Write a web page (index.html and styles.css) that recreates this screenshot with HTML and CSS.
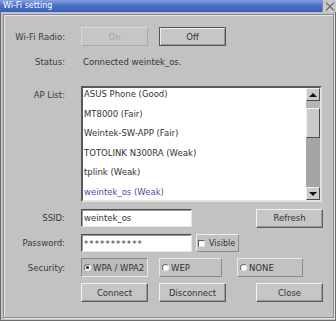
FILE: index.html
```html
<!DOCTYPE html>
<html lang="en">
<head>
  <meta charset="UTF-8" />
  <title>Wi-Fi setting</title>
  <link rel="stylesheet" href="styles.css">
</head>
<body>
  <div class="window">
    <div class="titlebar">
      <span class="title">Wi-Fi setting</span>
      <span class="close">
        <svg width="12" height="11" viewBox="0 0 12 11"><path d="M2 1.5 L10 9.5 M10 1.5 L2 9.5" stroke="#6a6a6a" stroke-width="1.1" fill="none"/></svg>
      </span>
    </div>
    <div class="body">
      <div class="panel">
        <div class="row row-btn">
          <span class="lbl">Wi-Fi Radio:</span>
          <div class="ctl">
            <button class="btn disabled">On</button>
            <button class="btn focus">Off</button>
          </div>
        </div>

        <div class="row row-status">
          <span class="lbl">Status:</span>
          <div class="ctl"><span class="status-text">Connected weintek_os.</span></div>
        </div>

        <div class="row row-list">
          <span class="lbl lbl-top">AP List:</span>
          <div class="ctl">
            <div class="listbox">
              <div class="items">
                <div class="item">ASUS Phone (Good)</div>
                <div class="item">MT8000 (Fair)</div>
                <div class="item">Weintek-SW-APP (Fair)</div>
                <div class="item">TOTOLINK N300RA (Weak)</div>
                <div class="item">tplink (Weak)</div>
                <div class="item selected">weintek_os (Weak)</div>
              </div>
              <div class="scrollbar">
                <div class="sb-btn"><span class="tri up"></span></div>
                <div class="sb-gap"></div>
                <div class="sb-thumb"></div>
                <div class="sb-track"></div>
                <div class="sb-btn"><span class="tri down"></span></div>
              </div>
            </div>
          </div>
        </div>

        <div class="row row-input">
          <span class="lbl">SSID:</span>
          <div class="ctl">
            <div class="input">weintek_os</div>
            <button class="btn push-right">Refresh</button>
          </div>
        </div>

        <div class="row row-input row-pass">
          <span class="lbl">Password:</span>
          <div class="ctl">
            <div class="input pass">***********</div>
            <div class="check-box"><span class="check"></span>Visible</div>
          </div>
        </div>

        <div class="row row-btn row-sec">
          <span class="lbl">Security:</span>
          <div class="ctl">
            <div class="radio-box on w-wpa"><span class="radio checked"></span>WPA / WPA2</div>
            <div class="radio-box w-wep"><span class="radio"></span>WEP</div>
            <div class="radio-box w-none"><span class="radio"></span>NONE</div>
          </div>
        </div>

        <div class="row row-btn row-actions">
          <span class="lbl"></span>
          <div class="ctl">
            <button class="btn">Connect</button>
            <button class="btn">Disconnect</button>
            <button class="btn push-right">Close</button>
          </div>
        </div>
      </div>
    </div>
  </div>
</body>
</html>
```

FILE: styles.css
```css
* {
  box-sizing: border-box;
}

body {
  margin: 0;
  background: #c2c2c2;
  font-family: 'DejaVu Sans', Verdana, sans-serif;
  font-size: 8.5px;
  color: #333333;
}

.window {
  width: 336px;
  height: 321px;
  background: #c2c2c2;
  border: 1px solid #6e6e6e;
  border-top: none;
  display: flex;
  flex-direction: column;
}

.titlebar {
  height: 12px;
  margin: 0 -1px;
  display: flex;
  align-items: stretch;
  background: linear-gradient(#86a2e2, #4a6fc6 45%, #3b5fb8);
}

.title {
  flex: 1;
  color: #ffffff;
  font-size: 8px;
  line-height: 12px;
  padding-left: 3px;
}

.close {
  width: 14px;
  background: #c9c9c9;
  border-left: 1px solid #8e8e8e;
  display: flex;
  align-items: center;
  justify-content: center;
}

.body {
  flex: 1;
  padding: 2px 1px 2px 2px;
  display: flex;
}

.panel {
  flex: 1;
  border: 1px solid #8c8c8c;
  box-shadow: inset 1px 1px 0 #e6e6e6, 1px 1px 0 #e6e6e6;
  padding: 12px 10px 0 1px;
}

.row {
  display: flex;
  align-items: center;
}

.lbl {
  width: 60px;
  margin-right: 16px;
  text-align: right;
  color: #3a3a3a;
  flex-shrink: 0;
}

.ctl {
  width: 241px;
  display: flex;
  align-items: center;
  height: 100%;
}

.row-btn {
  height: 19px;
}

.row-status {
  height: 18px;
  margin-top: 7px;
}

.status-text {
  padding-left: 2px;
}

.row-list {
  height: 116px;
  margin-top: 15px;
  align-items: flex-start;
}

.lbl-top {
  margin-top: 4px;
}

.row-input {
  height: 18px;
  margin-top: 7px;
}

.row-sec {
  margin-top: 6px;
}

.row-actions {
  margin-top: 6px;
}

/* buttons */
.btn {
  width: 67px;
  height: 19px;
  margin: 0 11px 0 0;
  padding: 0;
  font-family: inherit;
  font-size: 8.5px;
  color: #333333;
  background: #c6c6c6;
  border: 1px solid;
  border-color: #f2f2f2 #5e5e5e #5e5e5e #f2f2f2;
  box-shadow: inset -1px -1px 0 #999999;
}

.btn.focus {
  border-color: #555555;
  box-shadow: inset 1px 1px 0 #eeeeee, inset -1px -1px 0 #949494;
}

.btn.disabled {
  color: #a6a6a6;
  border-color: #dadada #a8a8a8 #a8a8a8 #dadada;
  box-shadow: none;
}

.push-right {
  margin-left: auto;
  margin-right: -1px;
}

/* inputs */
.input {
  width: 111px;
  height: 18px;
  background: #ffffff;
  border: 1px solid;
  border-color: #4e4e4e #e4e4e4 #e4e4e4 #4e4e4e;
  box-shadow: inset 1px 1px 0 #9a9a9a;
  padding-left: 2px;
  line-height: 16px;
}

.input.pass {
  letter-spacing: 1.1px;
  padding-top: 1px;
}

.check-box {
  width: 43px;
  height: 18px;
  margin-left: 4px;
  border: 1px solid;
  border-color: #eeeeee #8a8a8a #8a8a8a #eeeeee;
  display: flex;
  align-items: center;
  padding-left: 1px;
  white-space: nowrap;
  font-size: 8px;
}

.check {
  width: 7px;
  height: 7px;
  flex-shrink: 0;
  background: #ffffff;
  border: 1px solid;
  border-color: #5a5a5a #e0e0e0 #e0e0e0 #5a5a5a;
  margin-right: 4px;
}

/* radios */
.radio-box {
  height: 19px;
  border: 1px solid;
  border-color: #e8e8e8 #8a8a8a #8a8a8a #e8e8e8;
  display: flex;
  align-items: center;
  padding-left: 2px;
}

.radio-box.on {
  background: #bcbcbc;
  border-color: #8a8a8a #e8e8e8 #e8e8e8 #8a8a8a;
}

.w-wpa {
  width: 67px;
  margin-right: 11px;
}

.w-wep {
  width: 63px;
  margin-right: 15px;
}

.w-none {
  width: 66px;
}

.radio {
  width: 7px;
  height: 7px;
  border-radius: 50%;
  background: #ffffff;
  border: 1px solid;
  border-color: #6a6a6a #f0f0f0 #f0f0f0 #6a6a6a;
  margin-right: 2px;
  position: relative;
}

.radio.checked::after {
  content: "";
  position: absolute;
  left: 1px;
  top: 1px;
  width: 3px;
  height: 3px;
  border-radius: 50%;
  background: #111111;
}

/* list */
.listbox {
  width: 242px;
  height: 116px;
  display: flex;
  background: #ffffff;
  border: 2px solid;
  border-color: #5a5a5a #e2e2e2 #e2e2e2 #5a5a5a;
  overflow: hidden;
}

.items {
  flex: 1;
  margin-top: -3px;
}

.item {
  height: 19.6px;
  line-height: 19.6px;
  padding-left: 1px;
  color: #333333;
  white-space: nowrap;
}

.item.selected {
  color: #4a4aa6;
}

.scrollbar {
  width: 14px;
  display: flex;
  flex-direction: column;
  background: #a4a4a4;
}

.sb-btn {
  height: 13px;
  background: #cacaca;
  border: 1px solid;
  border-color: #f0f0f0 #4a4a4a #4a4a4a #f0f0f0;
  display: flex;
  align-items: center;
  justify-content: center;
}

.sb-gap {
  height: 7px;
  background: #b4b4b4;
}

.sb-thumb {
  height: 30px;
  background: #cacaca;
  border: 1px solid;
  border-color: #f0f0f0 #4a4a4a #4a4a4a #f0f0f0;
}

.sb-track {
  flex: 1;
}

.tri {
  width: 0;
  height: 0;
  border-left: 4px solid transparent;
  border-right: 4px solid transparent;
}

.tri.up {
  border-bottom: 4px solid #111111;
}

.tri.down {
  border-top: 4px solid #111111;
}
```
